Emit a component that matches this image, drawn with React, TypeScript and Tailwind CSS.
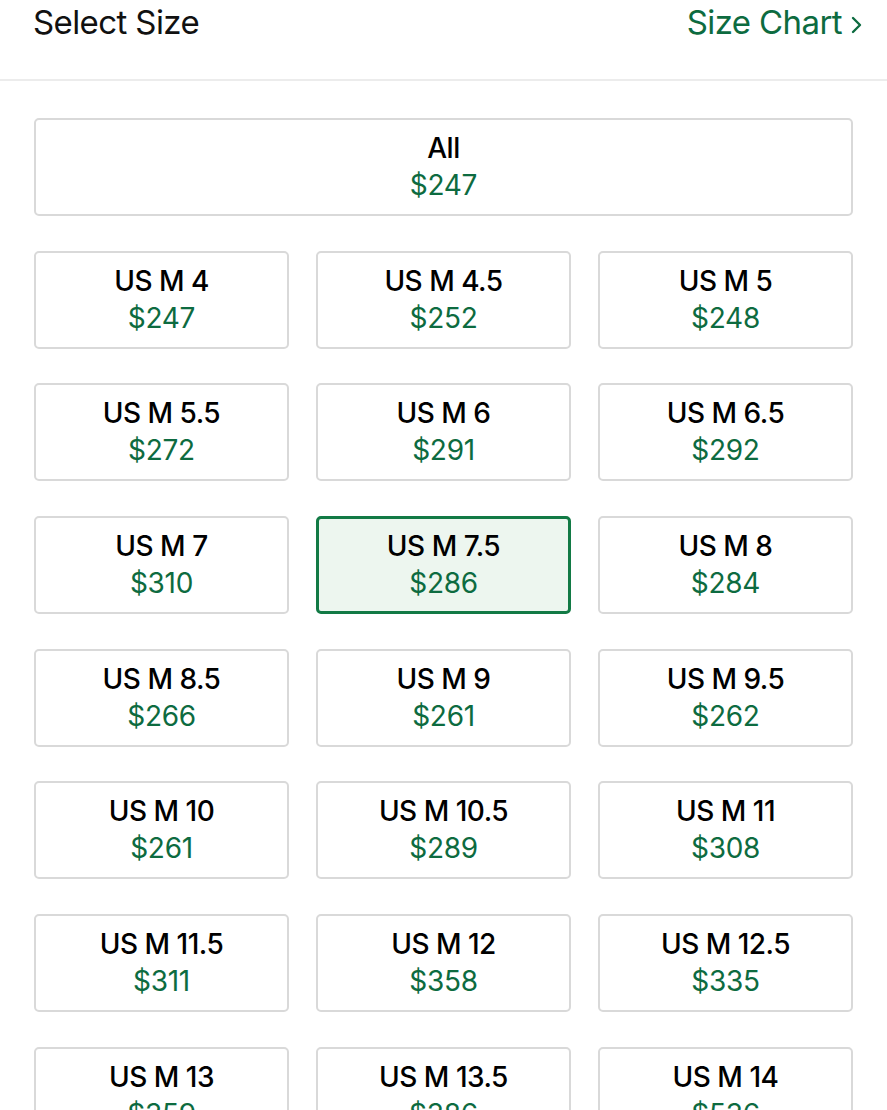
import { useState } from "react";

type Size = {
    label: string,
    price: number
}

const sizes: Size[] = [
    { label: "US M 4", price: 247 },
    { label: "US M 4.5", price: 252 },
    { label: "US M 5", price: 248 },
    { label: "US M 5.5", price: 272 },
    { label: "US M 6", price: 291 },
    { label: "US M 6.5", price: 292 },
    { label: "US M 7", price: 310 },
    { label: "US M 7.5", price: 286 },
    { label: "US M 8", price: 284 },
    { label: "US M 8.5", price: 266 },
    { label: "US M 9", price: 261 },
    { label: "US M 9.5", price: 262 },
    { label: "US M 10", price: 261 },
    { label: "US M 10.5", price: 289 },
    { label: "US M 11", price: 308 },
    { label: "US M 11.5", price: 311 },
    { label: "US M 12", price: 358 },
    { label: "US M 12.5", price: 335 },
    { label: "US M 13", price: 359 },
    { label: "US M 13.5", price: 386 },
    { label: "US M 14", price: 536 },
]

function SizeButton({ size, selected, onClick, wide }: { size: Size, selected: boolean, onClick: () => void, wide?: boolean }) {
    return (
        <button
            onClick={onClick}
            className={
                selected
                    ? "h-[98px] flex flex-col items-center justify-center rounded-[5px] border-[3px] border-[#127a45] bg-[#edf6ef]"
                    : "h-[98px] flex flex-col items-center justify-center rounded-[5px] border-2 border-[#d9d9d9] bg-white" + (wide ? " w-full" : "")
            }
        >
            <span className="text-[28px] leading-[37px] font-medium text-black tracking-[-0.5px]">{size.label}</span>
            <span className="text-[28px] leading-[37px] text-[#0d6b40] tracking-[-0.3px]">${size.price}</span>
        </button>
    )
}

export default function App() {
    const [selected, setSelected] = useState("US M 7.5")

    return (
        <div className="w-[887px] h-[1110px] overflow-hidden bg-white" style={{ fontFamily: "Inter, 'Liberation Sans', sans-serif" }}>
            {/* Header */}
            <div className="h-[81px] flex items-start justify-between pl-[33px] pr-[24px] pt-[2px] border-b-2 border-[#ececec]">
                <h2 className="text-[33px] leading-[40px] text-[#111] tracking-[-0.6px]">Select Size</h2>
                <button className="flex items-center gap-[9px] text-[33px] leading-[40px] text-[#0d6b40] tracking-[-0.6px]">
                    Size Chart
                    <svg width="12" height="20" viewBox="0 0 12 20" fill="none" className="mt-[6px]">
                        <path d="M2 3l7 7-7 7" stroke="#0d6b40" strokeWidth="2.4" strokeLinecap="round" strokeLinejoin="round" />
                    </svg>
                </button>
            </div>

            <div className="px-[34px] pt-[37px] flex flex-col gap-[34.7px]">
                <SizeButton
                    size={{ label: "All", price: 247 }}
                    selected={selected === "All"}
                    onClick={() => setSelected("All")}
                    wide
                />
                <div className="grid grid-cols-3 gap-x-[27px] gap-y-[34.7px]">
                    {sizes.map((s) => (
                        <SizeButton
                            key={s.label}
                            size={s}
                            selected={selected === s.label}
                            onClick={() => setSelected(s.label)}
                        />
                    ))}
                </div>
            </div>
        </div>
    );
}
